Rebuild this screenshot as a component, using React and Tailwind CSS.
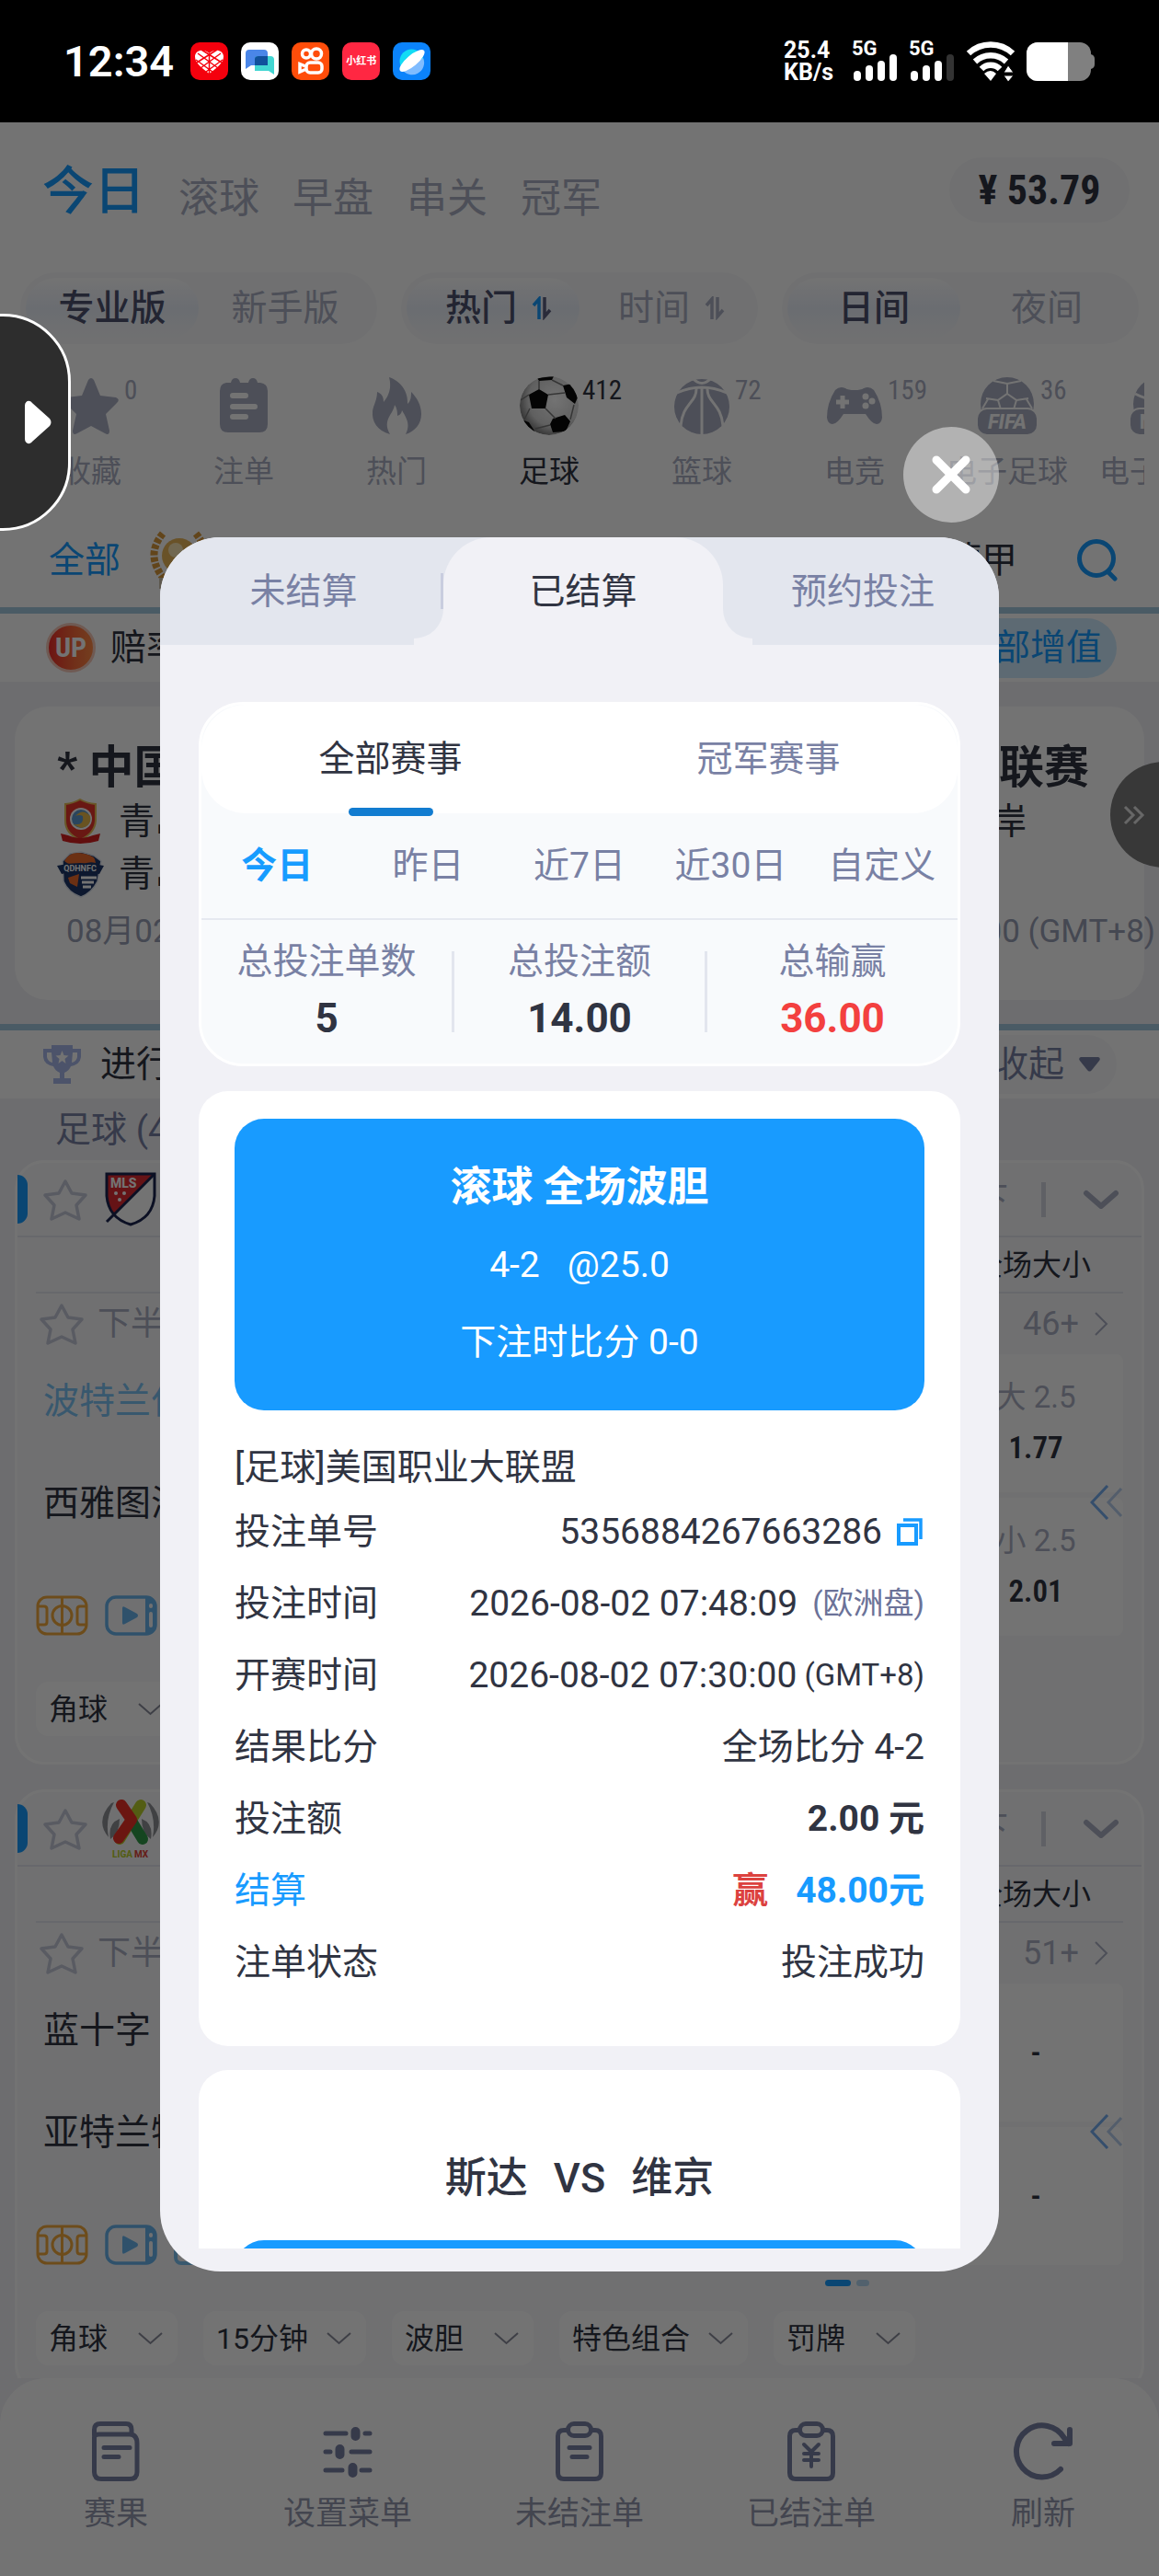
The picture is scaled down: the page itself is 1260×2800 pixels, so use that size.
import { useState } from "react";
import clsx from "clsx";

// ─────────────────────────────────────────────────────────────
// DATA
// ─────────────────────────────────────────────────────────────

const TOP_TABS = ["今日", "滚球", "早盘", "串关", "冠军"];

const SWITCHES = [
  { options: ["专业版", "新手版"], sort: false },
  { options: ["热门", "时间"], sort: true },
  { options: ["日间", "夜间"], sort: false },
];

const SPORTS = [
  { name: "收藏", count: "0", icon: StarIcon },
  { name: "注单", count: "", icon: SlipIcon },
  { name: "热门", count: "", icon: FlameIcon },
  { name: "足球", count: "412", icon: SoccerIcon, active: true },
  { name: "篮球", count: "72", icon: BasketballIcon },
  { name: "电竞", count: "159", icon: GamepadIcon },
  { name: "电子足球", count: "36", icon: FifaIcon },
  { name: "电子篮球", count: "", icon: NbaIcon },
];

const MATCHES = [
  {
    logo: MlsLogo,
    more: "46+",
    home: "波特兰伐木者",
    away: "西雅图海湾人",
    homeLive: true,
    odds: [["大 2.5", "1.77"], ["小 2.5", "2.01"]],
    chips: ["角球"],
  },
  {
    logo: LigaMxLogo,
    more: "51+",
    home: "蓝十字",
    away: "亚特兰特",
    odds: [["", "-"], ["", "-"]],
    chips: ["角球", "15分钟", "波胆", "特色组合", "罚牌"],
  },
];

const NAV = [
  { name: "赛果", icon: ResultIcon },
  { name: "设置菜单", icon: SlidersIcon },
  { name: "未结注单", icon: OpenBetsIcon },
  { name: "已结注单", icon: SettledBetsIcon },
  { name: "刷新", icon: RefreshIcon },
];

const STATS = [
  { label: "总投注单数", value: "5" },
  { label: "总投注额", value: "14.00" },
  { label: "总输赢", value: "36.00", win: true },
];

// ─────────────────────────────────────────────────────────────
// MAIN COMPONENT
// ─────────────────────────────────────────────────────────────

export default function App() {
  return (
    <div
      lang="zh-CN"
      className="relative flex h-screen flex-col overflow-hidden bg-[#f1f1f6] font-['Roboto','Noto_Sans_CJK_SC',sans-serif] text-[39px] leading-[58px] text-[#303442]"
    >
      <StatusBar />
      <div className="relative flex min-h-0 flex-1 flex-col">
        <main className="min-h-0 flex-1 overflow-hidden">
          <Header />
          <FeaturedCard />
          <MatchList />
        </main>
        <BottomNav />

        <div className="absolute inset-0 flex flex-col bg-black/55 px-[174px] pt-[331px] pb-[331px]">
          <button
            aria-label="关闭"
            className="mb-4 flex size-[104px] shrink-0 items-center justify-center self-end rounded-full bg-white/45"
          >
            <svg width="44" height="44" viewBox="0 0 44 44" stroke="#fff" strokeWidth="9" strokeLinecap="round">
              <path d="M6 6 38 38M38 6 6 38" />
            </svg>
          </button>
          <BetHistoryModal />
        </div>

        {/* Floating drawer handle on the left edge */}
        <button
          aria-label="展开"
          className="absolute top-[208px] -left-1 flex h-[236px] w-[81px] items-center justify-end rounded-r-[74px] border-[3px] border-white bg-[#2d2d2d] pr-[18px]"
        >
          <svg width="30" height="48" viewBox="0 0 30 48" fill="#fff">
            <path d="M1 6C1 1 6-1 9 3L28 20Q31 24 28 28L9 45C6 49 1 47 1 42Z" />
          </svg>
        </button>
      </div>
    </div>
  );
}

// ─── STATUS BAR ───

function StatusBar() {
  return (
    <div className="flex h-[133px] shrink-0 items-center justify-between bg-black pr-[70px] pl-[69px] text-white">
      <div className="flex items-center gap-[18px]">
        <span className="text-[47px] font-semibold">12:34</span>
        <div className="flex gap-[14px]">
          <svg width="41" height="41" viewBox="0 0 41 41">
            <rect width="41" height="41" rx="10" fill="#f5000d" />
            <path d="M20.500 34C11 27 5 22 5 15.500 5 9 14 6 20.500 12 27 6 36 9 36 15.500 36 22 30 27 20.500 34Z" fill="#fff" />
            <path d="M8 12 30 28M6 19 24 32M12 8 34 22M33 12 11 28M35 19 17 32M29 8 7 22M20.500 12V34" stroke="#f5000d" strokeWidth="1.500" />
          </svg>
          <svg width="41" height="41" viewBox="0 0 41 41">
            <rect width="41" height="41" rx="10" fill="#fff" />
            <path d="M5 12Q5 8 9 8H25Q29 8 29 12V25H11L5 29Z" fill="#4a86e8" />
            <path d="M15 18Q15 15 19 15H32Q36 15 36 19V35L30 31H15Z" fill="#42d6d2" />
            <path d="M15 18Q15 15 19 15H29V25H15Z" fill="#10509c" />
          </svg>
          <svg width="41" height="41" viewBox="0 0 41 41" fill="none" stroke="#fff" strokeWidth="3.500">
            <rect width="41" height="41" rx="10" fill="#ff4d0a" stroke="none" />
            <circle cx="16" cy="12.500" r="4.500" />
            <circle cx="27" cy="12.500" r="5.500" />
            <rect x="16" y="22" width="17" height="11" rx="4" />
            <path d="M15 26 9 23.500V32L15 29.500" />
          </svg>
          <span className="flex h-[41px] w-[41px] items-center justify-center rounded-[10px] bg-[#ff2742] text-[11px] leading-none font-bold">
            小红书
          </span>
          <svg width="41" height="41" viewBox="0 0 41 41">
            <rect width="41" height="41" rx="10" fill="#0b83fb" />
            <circle cx="20.500" cy="20.500" r="13" fill="#12dcf5" />
            <path d="M10 29A13 13 0 0 0 33 17Z" fill="#7fbcff" />
            <ellipse cx="21" cy="20" rx="17" ry="6" transform="rotate(-40 21 20)" fill="#fff" />
          </svg>
        </div>
      </div>
      <div className="flex items-center gap-3 font-bold">
        <div className="mr-2 text-[25px] leading-[24px]">
          <div>25.4</div>
          <div>KB/s</div>
        </div>
        <Signal bars={4} />
        <Signal bars={3} />
        <svg width="54" height="44" viewBox="0 0 54 44" fill="none" stroke="#fff" strokeWidth="6.500">
          <path d="M3 13A35 35 0 0 1 51 13" />
          <path d="M10 22A25 25 0 0 1 44 22" />
          <path d="M17 30A14 14 0 0 1 37 30" />
          <path d="M20 35Q27 29 33 35L27 43Z" fill="#fff" stroke="none" />
          <path d="M41 34 46 26 52 34ZM41 37H52L46 44Z" fill="#fff" stroke="#000" strokeWidth="1" />
        </svg>
        <svg width="74" height="42" viewBox="0 0 74 42">
          <rect width="70" height="42" rx="12" fill="#808080" />
          <path d="M70 13Q74 14 74 18V24Q74 28 70 29Z" fill="#808080" />
          <path d="M12 0H45V42H12A12 12 0 0 1 0 30V12A12 12 0 0 1 12 0Z" fill="#fff" />
        </svg>
      </div>
    </div>
  );
}

function Signal({ bars }) {
  return (
    <div className="relative">
      <span className="absolute -top-[5px] left-0 text-[22px] leading-[26px]">5G</span>
      <svg width="50" height="44" viewBox="0 0 50 44" fill="#fff">
        {[11, 17, 22, 29].map((h, i) => (
          <rect key={h} x={2 + i * 13} y={43 - h} width="8" height={h} rx="4" opacity={i < bars ? 1 : 0.2} />
        ))}
      </svg>
    </div>
  );
}

// ─── HEADER ───

function Header() {
  const [top, setTop] = useState("今日");

  return (
    <header className="bg-white">
      <div className="flex items-start justify-between pt-[38px] pr-8 pb-[51px] pl-[46px]">
        <nav className="flex items-end gap-9">
          {TOP_TABS.map((t) => (
            <button
              key={t}
              onClick={() => setTop(t)}
              className={clsx(
                t === top ? "text-[56px] leading-[74px] font-medium text-[#179cff]" : "text-[44px] leading-[58px] text-[#abafc3]"
              )}
            >
              {t}
            </button>
          ))}
        </nav>
        <span className="flex h-[71px] w-[196px] items-center justify-center rounded-full bg-[#f8f9fb] font-['Roboto_Condensed','Liberation_Sans_Narrow',sans-serif] text-[44px] font-bold">
          ¥ 53.79
        </span>
      </div>

      <div className="flex gap-[26px] px-[22px]">
        {SWITCHES.map((s) => (
          <div key={s.options[0]} className="flex h-[78px] flex-1 rounded-full bg-[#f8f9fb] p-1.5">
            {s.options.map((o, i) => (
              <button
                key={o}
                className={clsx(
                  "flex flex-1 items-center justify-center gap-4 rounded-full",
                  s.sort && "pl-3",
                  i === 0
                    ? "bg-linear-to-b from-white via-[#ecf1fb] to-[#f8f9fb] font-medium text-[#5d6080]"
                    : "text-[#abafc3]"
                )}
              >
                <span className={i === 0 ? "text-[#4f5270]" : ""}>{o}</span>
                {s.sort && (
                  <svg width="22" height="26" viewBox="0 0 22 26" fill="none" strokeWidth="3.500">
                    <path d="M2 10 8 3V25" stroke={i === 0 ? "#179cff" : "currentColor"} />
                    <path d="M14 1V22L20 15" stroke="currentColor" />
                  </svg>
                )}
              </button>
            ))}
          </div>
        ))}
      </div>

      <div className="mr-4 flex overflow-hidden pt-[34px] pl-4">
        {SPORTS.map(({ name, count, icon: Icon, active }) => (
          <button
            key={name}
            className={clsx("relative flex w-[166px] shrink-0 flex-col items-center", active ? "text-[#303442]" : "text-[#abafc3]")}
          >
            <Icon />
            <span className="mt-[19px] text-[33px] leading-[40px] whitespace-nowrap">{name}</span>
            <span className="absolute top-0 left-[119px] font-['Roboto_Condensed','Liberation_Sans_Narrow',sans-serif] text-[29px] leading-[32px]">
              {count}
            </span>
          </button>
        ))}
      </div>

      <div className="mt-6 flex h-[110px] items-center border-b-[7px] border-[#a5cae0] pr-[44px] pl-[53px]">
        <button className="text-[#179cff]">全部</button>
        <LaurelIcon />
        <button className="ml-auto">德甲</button>
        <button aria-label="搜索" className="ml-[64px]">
          <svg width="46" height="46" viewBox="0 0 46 46" fill="none" stroke="#179cff" strokeWidth="5" strokeLinecap="round">
            <circle cx="22" cy="21" r="18.500" />
            <path d="m35 36 7 7" />
          </svg>
        </button>
      </div>

      <div className="flex h-[74px] items-center pr-[46px] pl-[50px]">
        <span className="flex size-[54px] items-center justify-center rounded-full border-[3px] border-[#f5c8b8] bg-linear-to-r from-[#f02a2a] to-[#ff8a45] font-['Roboto_Condensed',sans-serif] text-[30px] leading-none font-bold text-white">
          UP
        </span>
        <span className="ml-4">赔率</span>
        <button className="ml-auto flex h-[65px] items-center rounded-full bg-[#cfecff] px-4 text-[#179cff]">全部增值</button>
      </div>
    </header>
  );
}

// ─── FEATURED MATCH ───

function FeaturedCard() {
  return (
    <section className="relative mx-4 my-[27px] mb-[26px] rounded-[36px] bg-white pt-[38px] pb-[40px]">
      <h2 className="flex justify-between pr-[60px] pl-[46px] text-[49px] font-bold">
        <span>* 中国</span>
        <span>联赛</span>
      </h2>
      <div className="flex h-[57px] items-center pr-[128px] pl-[46px]">
        <WestCoastLogo />
        <span className="ml-4">青岛</span>
        <span className="ml-auto">岸</span>
      </div>
      <div className="flex h-[57px] items-center pl-[46px]">
        <HainiuLogo />
        <span className="ml-4">青岛</span>
      </div>
      <div className="-mr-3 flex h-[69px] items-center justify-between pl-[56px] text-[35px] text-[#9a9fb5]">
        <span>08月02日</span>
        <span>19:00 (GMT+8)</span>
      </div>
      <button aria-label="更多" className="absolute top-[60px] -right-[78px] flex size-[115px] items-center rounded-full bg-[#7c7c7c] pl-[14px]">
        <svg width="24" height="24" viewBox="0 0 24 24" fill="none" stroke="#e4e4e4" strokeWidth="3">
          <path d="m2 3 9 9-9 9M12 3l9 9-9 9" />
        </svg>
      </button>
    </section>
  );
}

// ─── MATCH LIST ───

function MatchList() {
  return (
    <section>
      <div className="flex h-[81px] items-center border-t-[7px] border-[#a5cae0] bg-white pr-[46px] pl-[46px]">
        <svg width="43" height="42" viewBox="0 0 43 42" fill="#a9b9ea">
          <path d="M10 0H33V4H42V13Q41 21 31 23 29 28 24 30V36H31V42H12V36H19V30Q14 28 12 23 2 21 1 13V4H10ZM10 8H5V13Q6 18 11 19ZM33 8 32 19Q37 18 38 13V8Z" />
          <path d="m21.500 6 2 5 5 .5-4 3.500 1 5-4-3-4 3 1-5-4-3.500 5-.5Z" fill="#fff" />
        </svg>
        <span className="ml-[20px]">进行中</span>
        <button className="ml-auto flex h-16 items-center gap-4 rounded-full bg-[#f8f9fb] pr-[18px] pl-6 text-[#7981a4]">
          收起
          <svg width="23" height="16" viewBox="0 0 23 16" fill="currentColor">
            <path d="M2 0H21Q24 1 22 4L14 14Q11.500 17 9 14L1 4Q-1 1 2 0Z" />
          </svg>
        </button>
      </div>
      <div className="flex h-[67px] items-center pl-[60px] text-[#7981a4]">足球 (48)</div>
      {MATCHES.map((m) => (
        <MatchCard key={m.home} match={m} />
      ))}
    </section>
  );
}

function MatchCard({ match }) {
  const { logo: Logo, more, home, away, homeLive, odds, chips } = match;

  return (
    <article className="mx-4 mb-[27px] rounded-[32px] border-[3px] border-white bg-[#f8f9fb] pb-7">
      <div className="flex h-[81px] items-center border-b-2 border-[#e4e6f0] pr-[24px]">
        <span className="h-[53px] w-[11px] rounded-r-[11px] bg-[#179cff]" />
        <OutlineStar className="ml-[16px]" />
        <span className="ml-[14px] flex w-[64px] justify-center">
          <Logo />
        </span>
        <span className="ml-auto text-[36px] text-[#abafc3]">下</span>
        <span className="ml-[36px] h-[38px] w-[5px] bg-[#d3d5e0]" />
        <svg className="ml-[40px]" width="40" height="24" viewBox="0 0 40 24" fill="none" stroke="#abafc3" strokeWidth="6" strokeLinecap="round" strokeLinejoin="round">
          <path d="m4 5 16 14L36 5" />
        </svg>
      </div>

      <div className="mx-5 flex h-[61px] items-center justify-end border-b-2 border-[#e4e6f0]">
        <span className="w-[190px] pr-2 text-center text-[32px]">全场大小</span>
      </div>

      <div className="mx-5 flex h-[66px] items-center pr-4 text-[36px] text-[#abafc3]">
        <OutlineStar className="ml-[3px]" />
        <span className="ml-[14px]">下半场</span>
        <span className="ml-auto">{more}</span>
        <svg className="ml-4" width="16" height="28" viewBox="0 0 16 28" fill="none" stroke="currentColor" strokeWidth="2">
          <path d="m2 2 12 12L2 26" />
        </svg>
      </div>

      <div className="relative mx-5 flex h-[306px]">
        <div className="flex flex-1 flex-col">
          <span className={clsx("flex h-[102px] items-center pl-[8px]", homeLive && "text-[#7cc3f4]")}>{home}</span>
          <span className="flex h-[120px] items-center pl-[8px]">{away}</span>
          <div className="mt-auto flex gap-[18px]">
            <PitchIcon />
            <VideoIcon />
            <span className="h-[44px] w-[57px] rounded-lg border-4 border-[#7cc3f4]" />
          </div>
        </div>
        <div className="flex w-[190px] flex-col gap-1.5">
          {odds.map(([line, price], i) => (
            <div key={i} className="flex flex-1 flex-col items-center justify-center gap-[6px] rounded-lg bg-white">
              {line && <span className="text-[33px] leading-[48px] text-[#abafc3]">{line}</span>}
              <span className="font-['Roboto_Condensed','Liberation_Sans_Narrow',sans-serif] text-[33px] leading-[50px] font-semibold">{price}</span>
            </div>
          ))}
        </div>
        <svg className="absolute top-[142px] right-0" width="36" height="38" viewBox="0 0 36 38" fill="none" strokeWidth="3">
          <path d="M19 1 2 19 19 37" stroke="#76aef0" />
          <path d="M34 4 20 19 34 34" stroke="#b9cfee" />
        </svg>
      </div>

      <div className="mx-5 mt-4 flex justify-end">
        <div className="flex w-[600px] justify-center gap-[6px]">
          <span className="h-[7px] w-7 rounded-full bg-[#179cff]" />
          <span className="h-[7px] w-3.5 rounded-full bg-[#b5d8f2]" />
        </div>
      </div>

      <div className="mx-5 mt-[27px] flex gap-7">
        {chips.map((c) => (
          <button key={c} className="flex h-[59px] min-w-[154px] items-center justify-between gap-[20px] rounded-[14px] bg-white pr-4 pl-3.5 text-[32px]">
            {c}
            <svg width="27" height="14" viewBox="0 0 27 14" fill="none" stroke="#8a8d9c" strokeWidth="2">
              <path d="m1 1 12.500 11L26 1" />
            </svg>
          </button>
        ))}
      </div>
    </article>
  );
}

// ─── BOTTOM NAV ───

function BottomNav() {
  return (
    <nav className="flex h-[215px] shrink-0 rounded-t-[50px] bg-white">
      {NAV.map(({ name, icon: Icon }) => (
        <button key={name} className="flex flex-1 flex-col items-center pt-[46px] text-[35px] text-[#9599b0]">
          <span className="flex h-[68px] items-center text-[#7981a4]">
            <Icon />
          </span>
          <span className="mt-1 leading-[60px]">{name}</span>
        </button>
      ))}
    </nav>
  );
}

// ─────────────────────────────────────────────────────────────
// BET HISTORY MODAL
// ─────────────────────────────────────────────────────────────

function BetHistoryModal() {
  const [scope, setScope] = useState("全部赛事");
  const [range, setRange] = useState("今日");

  return (
    <div role="dialog" aria-label="投注记录" className="flex min-h-0 flex-1 flex-col overflow-hidden rounded-[66px] bg-[#f1f1f6]">
      <div className="-mr-1 flex h-[117px] shrink-0 bg-[#e3e6ee] pl-1 text-[#7981a4]">
        <button className="flex-1">未结算</button>
        <button className="relative flex-1 rounded-t-[52px] bg-[#f1f1f6] text-[#303442]">
          <span className="absolute right-full bottom-0 h-[39px] w-8 bg-[#f1f1f6]">
            <span className="block h-8 rounded-br-[32px] bg-[#e3e6ee]" />
          </span>
          <span className="absolute bottom-0 left-full h-[39px] w-8 bg-[#f1f1f6]">
            <span className="block h-8 rounded-bl-[32px] bg-[#e3e6ee]" />
          </span>
          <span className="absolute top-[39px] right-full h-[39px] w-[3px] bg-[#c9cddf]" />
          已结算
        </button>
        <button className="flex-1">预约投注</button>
      </div>

      <div className="mx-[42px] mt-[62px] mb-[25px] min-h-0 flex-1 overflow-hidden">
        <section className="rounded-[48px] border-[3px] border-white bg-[#f8fafc] text-[#7981a4]">
          <div className="flex h-[118px] rounded-[48px] bg-white">
            {["全部赛事", "冠军赛事"].map((s) => (
              <button key={s} onClick={() => setScope(s)} className={clsx("relative flex-1", s === scope && "text-[#303442]")}>
                {s}
                {s === scope && <span className="absolute -bottom-[3px] left-1/2 h-[9px] w-[92px] -translate-x-1/2 rounded-full bg-[#127cd0]" />}
              </button>
            ))}
          </div>
          <div className="flex h-[116px] border-b-2 border-[#e6e9f0]">
            {["今日", "昨日", "近7日", "近30日", "自定义"].map((r) => (
              <button key={r} onClick={() => setRange(r)} className={clsx("flex-1", r === range && "font-bold text-[#179cff]")}>
                {r}
              </button>
            ))}
          </div>
          <dl className="flex h-[156px] items-center divide-x-[3px] divide-[#e2e5ee]">
            {STATS.map((s) => (
              <div key={s.label} className="flex h-[88px] flex-1 flex-col items-center justify-center">
                <dt>{s.label}</dt>
                <dd className={clsx("text-[44px] leading-[66px] font-bold", s.win ? "text-[#f3403f]" : "text-[#303442]")}>{s.value}</dd>
              </div>
            ))}
          </dl>
        </section>

        <section className="mt-[27px] rounded-[32px] bg-white px-[39px] pt-[30px] pb-[52px]">
          <div className="flex h-[317px] flex-col items-center justify-center rounded-[32px] bg-[#189bff] text-white">
            <strong className="text-[45px] leading-[84px] font-bold">滚球 全场波胆</strong>
            <span className="flex gap-[30px] leading-[84px]">
              <span>4-2</span>
              <span>@25.0</span>
            </span>
            <span className="leading-[84px]">下注时比分 0-0</span>
          </div>
          <h3 className="mt-[33px] mb-0.5">[足球]美国职业大联盟</h3>
          <dl>
            <Row label="投注单号">
              5356884267663286
              <button aria-label="复制" className="mx-0.5 ml-4">
                <svg width="28" height="30" viewBox="0 0 28 30" fill="none" stroke="#189bff" strokeWidth="4">
                  <path d="M2 8H21V28H2Z" />
                  <path d="M7 2H26V23" strokeWidth="3.500" />
                </svg>
              </button>
            </Row>
            <Row label="投注时间">
              2026-08-02 07:48:09
              <span className="ml-4 text-[33px] text-[#6b7298]">(欧洲盘)</span>
            </Row>
            <Row label="开赛时间">
              2026-08-02 07:30:00
              <span className="ml-2 text-[33px]">(GMT+8)</span>
            </Row>
            <Row label="结果比分">全场比分 4-2</Row>
            <Row label="投注额">
              <b>2.00 元</b>
            </Row>
            <Row label="结算" labelClass="text-[#189bff]">
              <b className="text-[#dc423f]">赢</b>
              <b className="ml-[30px] text-[#189bff]">48.00元</b>
            </Row>
            <Row label="注单状态">投注成功</Row>
          </dl>
        </section>

        <section className="mt-[26px] rounded-[32px] bg-white px-[39px] pt-[82px]">
          <h3 className="flex h-[72px] items-center justify-center gap-[28px] text-[45px] font-medium">
            <span>斯达</span>
            <span>VS</span>
            <span>维京</span>
          </h3>
          <div className="mt-[31px] h-[317px] rounded-[32px] bg-[#189bff]" />
        </section>
      </div>
    </div>
  );
}

function Row({ label, labelClass, children }) {
  return (
    <div className="flex h-[78px] items-center justify-between">
      <dt className={labelClass}>{label}</dt>
      <dd className="flex items-center">{children}</dd>
    </div>
  );
}

// ─────────────────────────────────────────────────────────────
// ICONS
// ─────────────────────────────────────────────────────────────

function StarIcon() {
  return (
    <svg width="66" height="66" viewBox="0 0 66 66" fill="currentColor">
      <path d="M30 5Q33 1 36 5L43 22 60 24Q65 26 61 30L49 42 53 60Q53 66 48 63L33 55 18 63Q13 66 13 60L17 42 5 30Q1 26 6 24L23 22Z" />
    </svg>
  );
}

function SlipIcon() {
  return (
    <svg width="66" height="66" viewBox="0 0 66 66">
      <path d="M14 8H19Q20 3 24 3T29 8H38Q39 3 43 3T48 8H51Q59 9 59 17V53Q59 62 50 62H16Q7 62 7 53V17Q7 9 14 8Z" fill="currentColor" />
      <path d="M21 22H35M21 34H45M21 45H35" stroke="#fff" strokeWidth="6" strokeLinecap="round" />
    </svg>
  );
}

function FlameIcon() {
  return (
    <svg width="66" height="66" viewBox="0 0 66 66" fill="currentColor">
      <path d="M26 64C12 60 6 50 7 39 8 32 12 27 12 18 17 20 19 23 19 29 25 22 28 13 25 2 37 6 46 17 45 31 49 28 49 22 49 18 55 24 60 32 60 42 60 53 53 61 43 64 49 53 43 45 39 38 38 43 36 43 34 44 34 38 33 35 31 32 30 42 17 48 26 64Z" />
    </svg>
  );
}

function SoccerIcon() {
  return (
    <svg width="66" height="66" viewBox="0 0 66 66">
      <defs>
        <radialGradient id="ball" cx="0.6" cy="0.4" r="0.65">
          <stop offset="0" stopColor="#fff" />
          <stop offset="0.7" stopColor="#d5d5d5" />
          <stop offset="1" stopColor="#6e6e6e" />
        </radialGradient>
        <clipPath id="ballClip">
          <circle cx="33" cy="33" r="32" />
        </clipPath>
      </defs>
      <g clipPath="url(#ballClip)">
        <circle cx="33" cy="33" r="32" fill="url(#ball)" />
        <path d="M22 15 32 21 29 36H14L11 21ZM48 11 58 9 64 24 61 31 52 24ZM37 47 50 43 56 50 51 61 37 62 34 53ZM3 48 11 51 18 62 8 62ZM20 3 38 1 36 5 22 6Z" fill="#0a0a0a" />
        <path d="M32 21 50 19M29 36 40 47M56 48 60 32M12 36 6 48M18 58 34 54M22 15 22 6M48 11 36 5M11 21 2 27" stroke="#777" strokeWidth="1.500" fill="none" />
      </g>
    </svg>
  );
}

function BasketballIcon() {
  return (
    <svg width="66" height="66" viewBox="0 0 66 66" fill="none" stroke="#fff" strokeWidth="3">
      <circle cx="33" cy="34" r="30" fill="currentColor" stroke="none" />
      <path d="M33 12V64M6 19Q33 7 60 19" />
      <path d="M23 3Q33 14 43 3" />
      <path d="M27 13C28 30 12 30 10 55M39 13C38 30 54 30 56 55" />
    </svg>
  );
}

function GamepadIcon() {
  return (
    <svg width="66" height="66" viewBox="0 0 66 66">
      <path d="M12 16Q17 11 23 14 26 16 33 16T43 14Q49 11 54 16 63 30 63 46 62 53 57 53T45 42H21Q14 53 9 53T3 46Q3 30 12 16Z" fill="currentColor" />
      <path d="M20 22V36M13 29H27" stroke="#fff" strokeWidth="5" />
      <g fill="#fff">
        <circle cx="45" cy="23" r="3.500" />
        <circle cx="45" cy="33" r="3.500" />
        <circle cx="52" cy="28" r="3.500" />
      </g>
    </svg>
  );
}

function FifaIcon() {
  return (
    <svg width="66" height="66" viewBox="0 0 66 66">
      <circle cx="33" cy="31" r="29" fill="currentColor" />
      <path d="M33 20 43 27 40 37H26L23 27ZM33 20V9M23 27 10 25M43 27 56 25M33 9 18 6M33 9 48 6M6 36 12 26M60 36 54 26" fill="none" stroke="#fff" strokeWidth="2" />
      <rect x="0" y="36" width="66" height="29" rx="11" fill="currentColor" stroke="#fff" strokeWidth="2" />
      <text x="33" y="58" textAnchor="middle" fontFamily="Roboto, sans-serif" fontSize="22" fontWeight="800" fontStyle="italic" fill="#fff">
        FIFA
      </text>
    </svg>
  );
}

function NbaIcon() {
  return (
    <svg width="66" height="66" viewBox="0 0 66 66">
      <circle cx="33" cy="31" r="29" fill="currentColor" />
      <path d="M6 20Q33 34 60 20M33 3V40" fill="none" stroke="#fff" strokeWidth="3" />
      <rect x="0" y="36" width="66" height="29" rx="11" fill="currentColor" stroke="#fff" strokeWidth="2" />
      <text x="33" y="58" textAnchor="middle" fontFamily="Roboto, sans-serif" fontSize="22" fontWeight="800" fill="#fff">
        NBA
      </text>
    </svg>
  );
}

function LaurelIcon() {
  return (
    <svg className="ml-[32px]" width="64" height="66" viewBox="0 0 64 66">
      <circle cx="32" cy="28" r="19" fill="#e8b65a" />
      <circle cx="28" cy="22" r="8" fill="#fbe6b4" />
      <path d="M14 4Q-6 28 16 54M50 4Q70 28 48 54" fill="none" stroke="#d99a3c" strokeWidth="8" strokeDasharray="5 2" />
      <path d="M10 52H54V64H10Z" fill="#cfc3ae" />
    </svg>
  );
}

function OutlineStar({ className }) {
  return (
    <svg className={className} width="50" height="48" viewBox="0 0 50 48" fill="none" stroke="#c6c9da" strokeWidth="3.500" strokeLinejoin="round">
      <path d="M25 4 32 17 47 19 37 30 40 45 25 38 10 45 13 30 3 19 18 17Z" />
    </svg>
  );
}

function MlsLogo() {
  return (
    <svg width="56" height="60" viewBox="0 0 56 60">
      <path d="M2 2H54V26Q52 50 28 57 4 50 2 26Z" fill="#fff" />
      <path d="M2 2H54L11 46Q2 38 2 26Z" fill="#e02a32" />
      <path d="M54 2 2 54" stroke="#1b2550" strokeWidth="3" />
      <path d="M2 2H54V26Q52 50 28 57 4 50 2 26Z" fill="none" stroke="#1b2550" strokeWidth="3" />
      <text x="6" y="17" fontFamily="Roboto, sans-serif" fontSize="14" fontWeight="800" fill="#fff">
        MLS
      </text>
      <g fill="#fff">
        <circle cx="12" cy="23" r="2" />
        <circle cx="21" cy="23" r="2" />
        <circle cx="16" cy="30" r="2" />
      </g>
    </svg>
  );
}

function LigaMxLogo() {
  return (
    <svg width="64" height="66" viewBox="0 0 64 66" fill="none" strokeLinecap="round">
      <path d="M11 5Q-7 24 8 42 4 22 14 4ZM20 22Q7 27 10 44 20 38 20 22ZM53 5Q71 24 56 42 60 22 50 4ZM44 22Q57 27 54 44 44 38 44 22Z" fill="#8f9095" />
      <path d="M43 7 20 44" stroke="#b9cf2e" strokeWidth="12" />
      <path d="M34 26 45 44" stroke="#2f9a48" strokeWidth="12" />
      <path d="M22 7 33 23 19 43" stroke="#ee3226" strokeWidth="12" strokeLinejoin="round" />
      <text x="12" y="64" fontFamily="Roboto, sans-serif" fontSize="10" fontWeight="800" fill="#b9cf2e">
        LIGA
      </text>
      <text x="36" y="64" fontFamily="Roboto, sans-serif" fontSize="10" fontWeight="800" fill="#e0463a">
        MX
      </text>
    </svg>
  );
}

function WestCoastLogo() {
  return (
    <svg width="51" height="50" viewBox="0 0 51 50">
      <path d="M9 6Q18 5 25 1 32 5 42 6V24Q41 38 25 45 9 38 9 24Z" fill="#e8352c" stroke="#e8c05a" strokeWidth="2" />
      <circle cx="26" cy="22" r="12" fill="#fff" />
      <circle cx="26" cy="22" r="10" fill="#5d9ad0" />
      <path d="M17 28Q30 30 28 19 24 17 20 19 28 10 36 19 38 30 26 32Z" fill="#e9b949" />
      <path d="M4 38 12 40Q25 46 39 40L47 38 45 46Q25 52 6 46Z" fill="#d81f1f" />
    </svg>
  );
}

function HainiuLogo() {
  return (
    <svg width="51" height="52" viewBox="0 0 51 52">
      <path d="M6 12 14 4 26 2 40 6 48 12 44 34Q38 46 26 51 12 46 7 34Z" fill="#1d3768" stroke="#dfe5f0" strokeWidth="1.500" />
      <path d="M8 12Q14 0 30 4 42 6 42 14 34 12 28 16 18 20 8 12ZM12 30 24 26 22 40 14 36Z" fill="#ee6a2c" />
      <path d="M26 30H43M27 35H40M28 40H37" stroke="#fff" strokeWidth="3" />
      <path d="M0 17Q25 11 51 17L46 26Q25 20 5 26Z" fill="#1d3768" />
      <text x="25" y="23" textAnchor="middle" fontFamily="Roboto, sans-serif" fontSize="9" fontWeight="700" fill="#fff">
        QDHNFC
      </text>
    </svg>
  );
}

function PitchIcon() {
  return (
    <svg width="57" height="44" viewBox="0 0 57 44" fill="none" stroke="#f2a93c" strokeWidth="3">
      <rect x="2" y="2" width="53" height="40" rx="10" />
      <circle cx="28.500" cy="22" r="10.500" />
      <path d="M28.500 2V42M2 12H9Q12 12 12 15V29Q12 32 9 32H2M55 12H48Q45 12 45 15V29Q45 32 48 32H55" />
    </svg>
  );
}

function VideoIcon() {
  return (
    <svg width="57" height="44" viewBox="0 0 57 44">
      <rect x="2" y="2" width="53" height="40" rx="10" fill="none" stroke="#69b4ee" strokeWidth="3.500" />
      <path d="M44 2H46Q55 2 55 12V32Q55 42 46 42H44Z" fill="#69b4ee" />
      <path d="M19 14Q19 11 22 13L35 20Q37 22 35 24L22 31Q19 33 19 30Z" fill="#69b4ee" />
      <path d="M50 11V12M50 20V33" stroke="#f8f9fb" strokeWidth="4" strokeLinecap="round" />
    </svg>
  );
}

function ResultIcon() {
  return (
    <svg width="54" height="68" viewBox="0 0 54 68" fill="none" stroke="currentColor" strokeWidth="5" strokeLinecap="round" strokeLinejoin="round">
      <path d="M3.500 16V10Q3.500 3.500 10 3.500H38Q44 3.500 44 10V15H9Q4 15 3.500 18V56Q3.500 63.500 11 63.500H42Q50 63.500 50 56V25Q50 15 42 15" />
      <path d="M14 29.500H42M14 39.500H30" />
    </svg>
  );
}

function SlidersIcon() {
  return (
    <svg width="54" height="60" viewBox="0 0 54 60" stroke="currentColor" strokeLinecap="round">
      <path d="M3 10H25M46 10H51M3 30H8M31 30H51M3 50H21M42 50H51" strokeWidth="5" />
      <path d="M35.500 8V13M18.500 27V33M32.500 47V53" strokeWidth="10" />
    </svg>
  );
}

function Clipboard({ children }) {
  return (
    <svg width="54" height="68" viewBox="0 0 54 68" fill="none" stroke="currentColor" strokeWidth="5" strokeLinecap="round" strokeLinejoin="round">
      <path d="M14 10.500H10Q3.500 10.500 3.500 17V57Q3.500 63.500 10 63.500H44Q50.500 63.500 50.500 57V17Q50.500 10.500 44 10.500H40" />
      <rect x="14.500" y="3.500" width="25" height="13" rx="6.500" />
      {children}
    </svg>
  );
}

function OpenBetsIcon() {
  return (
    <Clipboard>
      <path d="M16 29.500H38M19 39.500H35" />
    </Clipboard>
  );
}

function SettledBetsIcon() {
  return (
    <Clipboard>
      <path d="m19 26 8 8 8-8M27 34V50M19 36H35M19 43H35" strokeWidth="4" />
    </Clipboard>
  );
}

function RefreshIcon() {
  return (
    <svg width="66" height="64" viewBox="0 0 66 64" fill="none" stroke="currentColor" strokeWidth="6" strokeLinecap="round" strokeLinejoin="round">
      <path d="M52 51A28 28 0 1 1 56 17L61 23" />
      <path d="M62 8V23H45" />
    </svg>
  );
}
